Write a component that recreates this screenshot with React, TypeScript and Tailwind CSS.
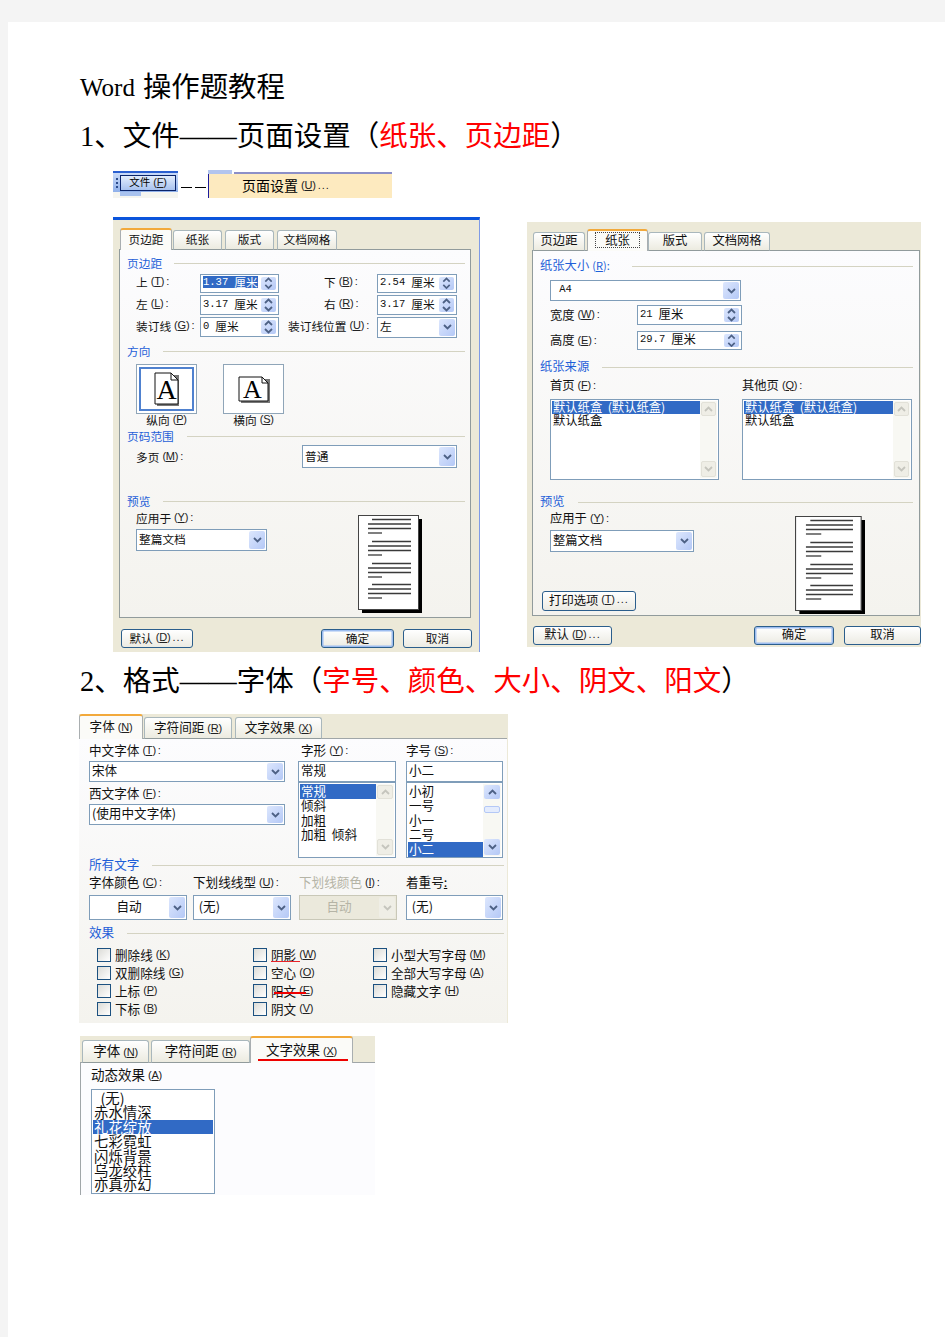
// App.tsx — scanned Word tutorial page: headings plus XP-style dialog screenshots.
import type { ReactNode } from "react";

const CJK = "font-['Liberation_Serif','Noto_Sans_CJK_SC',serif]";
const UI = "font-['Noto_Sans_CJK_SC',sans-serif]";

function M({ k, after = "" }: { k: string; after?: string }) {
    return (
        <span className="ml-[3px] text-[11px] tracking-[-0.2px] font-['Liberation_Sans',sans-serif] text-[#222]">
            (<span className="underline">{k}</span>){after && <span className="ml-[2px] tracking-[1px]">{after}</span>}
        </span>
    );
}

function Lbl({ t, k, after = ":", className = "" }: { t: string; k?: string; after?: string; className?: string }) {
    return (
        <span className={`inline-flex items-center whitespace-nowrap leading-none pb-[2px] ${className}`}>
            {t}
            {k && <M k={k} after={after} />}
        </span>
    );
}

function Chevron({ up = false, color = "#4d6185" }: { up?: boolean; color?: string }) {
    return (
        <svg width="9" height="6" viewBox="0 0 9 6" className={up ? "rotate-180" : ""}>
            <path d="M1 1 L4.5 4.5 L8 1" fill="none" stroke={color} strokeWidth="1.8" />
        </svg>
    );
}

function ComboBtn({ disabled = false }: { disabled?: boolean }) {
    return (
        <div className={`w-[16px] self-stretch m-[1px] rounded-[2px] flex items-center justify-center ${disabled ? "bg-[#efeee6]" : "bg-linear-to-br from-[#dde7fd] to-[#b4c8f6]"}`}>
            <Chevron color={disabled ? "#c5c5bd" : "#4d6185"} />
        </div>
    );
}

function SpinBtn() {
    return (
        <div className="w-[15px] self-stretch m-[2px] rounded-[2px] bg-linear-to-br from-[#dde7fd] to-[#b4c8f6] flex flex-col items-center justify-center gap-[2px]">
            <Chevron up />
            <Chevron />
        </div>
    );
}

function Field({ w, h, value, unit, kind, selected = false, center = false, disabled = false, mono = false }: {
    w: number; h: number; value: string; unit?: string; kind?: "spin" | "combo"; selected?: boolean; center?: boolean; disabled?: boolean; mono?: boolean;
}) {
    const numeric = mono || unit !== undefined;
    return (
        <div
            className={`flex items-stretch border ${disabled ? "border-[#c9c8b8] bg-[#ebe9dc] text-[#b5b4a6]" : "border-[#7f9db9] bg-white"}`}
            style={{ width: w, height: h }}
        >
            <div className={`flex-1 min-w-0 flex items-center px-[2px] pb-[2px] whitespace-pre leading-none ${center ? "justify-center" : ""}`}>
                <span className={`flex items-center ${selected ? "bg-[#316ac5] text-white" : ""}`}>
                    <span className={numeric ? "font-['Liberation_Mono',monospace] text-[10.5px]" : ""}>{value}</span>
                    {unit && <span className="ml-[6px]">{unit}</span>}
                </span>
            </div>
            {kind === "spin" && <SpinBtn />}
            {kind === "combo" && <ComboBtn disabled={disabled} />}
        </div>
    );
}

function Section({ title, k, gap, className = "", h = 14 }: { title: string; k?: string; gap: number; className?: string; h?: number }) {
    return (
        <div className={`flex items-center text-[#1f5fd8] ${className}`} style={{ height: h }}>
            <span className="whitespace-nowrap leading-none pb-[2px]">{title}{k && <span className="ml-[3px] text-[11px]">(<span className="underline">{k}</span>):</span>}</span>
            <div className="flex-1 h-px bg-[#d4d3c2]" style={{ marginLeft: gap }} />
        </div>
    );
}

function Btn({ w, h = 19, children, primary = false, className = "" }: { w: number; h?: number; children: ReactNode; primary?: boolean; className?: string }) {
    return (
        <div
            className={`flex items-center justify-center rounded-[3px] border border-[#2b5e8c] bg-linear-to-b from-white to-[#ecebe3] whitespace-nowrap leading-none ${primary ? "shadow-[inset_0_0_0_1.5px_#9dbdf0]" : ""} ${className}`}
            style={{ width: w, height: h }}
        >
            {children}
        </div>
    );
}

function Tab({ w, h, label, k, active = false, focus = false }: { w: number; h: number; label: string; k?: string; active?: boolean; focus?: boolean }) {
    return (
        <div
            className={`shrink-0 flex items-center justify-center rounded-t-[3px] border-x pb-[2px] whitespace-nowrap leading-none ${active
                ? "border-[#a9aeb0] border-t-2 border-t-[#f2a93b] bg-[#fbfbf8]"
                : "border-[#a9b7bc] border-t border-t-[#a9b7bc] border-b border-b-[#919b9c] bg-linear-to-b from-white to-[#ecebe0]"}`}
            style={{ width: w, height: h }}
        >
            <span className={focus ? "px-[9px] py-[1px] outline-1 outline-dotted outline-[#444]" : ""}>
                {label}{k && <M k={k} />}
            </span>
        </div>
    );
}

// the little document drawing in the preview box
function PreviewPage({ w, h }: { w: number; h: number }) {
    const blocks = [0, 22, 44, 65];
    return (
        <svg width={w} height={h} viewBox="0 0 64 98" preserveAspectRatio="none" className="shrink-0">
            <rect x="4" y="4" width="60" height="94" fill="#000" />
            <rect x="0.5" y="0.5" width="60" height="94" fill="#fff" stroke="#444" />
            {blocks.map(y => (
                <g key={y} stroke="#3a3a3a" strokeWidth="1.3">
                    <line x1="14" x2="53" y1={4.5 + y} y2={4.5 + y} />
                    <line x1="10" x2="53" y1={9 + y} y2={9 + y} />
                    <line x1="10" x2="53" y1={13.5 + y} y2={13.5 + y} />
                    <line x1="10" x2="24" y1={18 + y} y2={18 + y} />
                </g>
            ))}
        </svg>
    );
}

function OrientBtn({ label, k, portrait = false }: { label: string; k: string; portrait?: boolean }) {
    return (
        <div className="w-[61px] flex flex-col items-center">
            <div className={`w-[61px] h-[50px] flex items-center justify-center bg-white border border-[#8fa5b8] ${portrait ? "shadow-[inset_0_0_0_2px_#fff,inset_0_0_0_4px_#4f81cf]" : ""}`}>
                <svg width={portrait ? 26 : 32} height={portrait ? 34 : 27} viewBox={portrait ? "0 0 26 34" : "0 0 32 27"}>
                    {portrait ? (
                        <>
                            <path d="M3 3 H25 V34 H3 Z" fill="#777" />
                            <path d="M1 1 H17 L24 8 V32 H1 Z" fill="#fff" stroke="#111" strokeWidth="1" />
                            <path d="M17 1 V8 H24" fill="none" stroke="#111" />
                            <text x="12.5" y="27" textAnchor="middle" fontSize="28" fontFamily="Liberation Serif" fill="#000">A</text>
                        </>
                    ) : (
                        <>
                            <path d="M3 3 H32 V27 H3 Z" fill="#777" />
                            <path d="M1 1 H24 L30 7 V25 H1 Z" fill="#fff" stroke="#111" strokeWidth="1" />
                            <path d="M24 1 V7 H30" fill="none" stroke="#111" />
                            <text x="14.5" y="22" textAnchor="middle" fontSize="26" fontFamily="Liberation Serif" fill="#000">A</text>
                        </>
                    )}
                </svg>
            </div>
            <div className="h-[14px] flex items-center"><Lbl t={label} k={k} after="" /></div>
        </div>
    );
}

function ScrollCol({ w, blue = false, thumb = false }: { w: number; blue?: boolean; thumb?: boolean }) {
    const btn = blue ? "bg-linear-to-br from-[#dde7fd] to-[#b4c8f6]" : "bg-[#efeee6] border border-[#e2e1d8]";
    const col = blue ? "#4d6185" : "#c5c5bd";
    return (
        <div className="shrink-0 flex flex-col justify-between bg-[#f8f8f3] p-px" style={{ width: w }}>
            <div className={`h-[14px] rounded-[2px] flex items-center justify-center ${btn}`}><Chevron up color={col} /></div>
            {thumb && <div className="h-[7px] -mt-[20px] rounded-[2px] border border-[#b4c8f6] bg-[#e4ecfd]" />}
            <div className={`h-[16px] rounded-[2px] flex items-center justify-center ${btn}`}><Chevron color={col} /></div>
        </div>
    );
}

function ListBox({ w, h, items, sel, scroll, lh = 14, blue, thumb }: {
    w: number; h: number; items: string[]; sel: number; scroll: number; lh?: number; blue?: boolean; thumb?: boolean;
}) {
    return (
        <div className="flex border border-[#7f9db9] bg-white p-px" style={{ width: w, height: h }}>
            <div className="flex-1 min-w-0 leading-none">
                {items.map((it, i) => (
                    <div
                        key={it}
                        className={`whitespace-pre px-[1px] flex items-center ${i === sel ? "bg-[#316ac5] text-white" : ""}`}
                        style={{ height: lh }}
                    >
                        {it}
                    </div>
                ))}
            </div>
            {scroll > 0 && <ScrollCol w={scroll} blue={blue} thumb={thumb} />}
        </div>
    );
}

function MarginsDialog() {
    return (
        <div className={`${UI} w-[367px] shrink-0 border-t-[3px] border-t-[#0a54dc] border-r border-r-[#7f9be6] bg-[#ece9d8] pt-[8px] pb-[4px] text-[11.7px] text-[#111]`}>
            <div className="relative z-10 -mb-px flex items-end pl-[7px] h-[22px]">
                <Tab w={52} h={22} label="页边距" active />
                <div className="ml-px"><Tab w={49} h={20} label="纸张" /></div>
                <div className="ml-[3px]"><Tab w={49} h={20} label="版式" /></div>
                <div className="ml-[3px]"><Tab w={60} h={20} label="文档网格" /></div>
            </div>
            <div className="mx-[6px] w-[352px] h-[369px] border border-[#919b9c] bg-linear-to-b from-[#fcfcfe] to-[#f4f3ee] pt-[6px] pl-[7px] pr-[5px]">
                <Section title="页边距" gap={12} h={15} />
                <div className="pl-[9px] mt-[2px] grid grid-cols-[64px_79px_98px_80px] grid-rows-[20px_20px_20px] gap-y-[2px] items-center">
                    <Lbl t="上" k="T" /><Field w={79} h={19} value="1.37" unit="厘米" kind="spin" selected />
                    <Lbl t="下" k="B" className="pl-[45px]" /><Field w={80} h={19} value="2.54" unit="厘米" kind="spin" />
                    <Lbl t="左" k="L" /><Field w={79} h={20} value="3.17" unit="厘米" kind="spin" />
                    <Lbl t="右" k="R" className="pl-[45px]" /><Field w={80} h={20} value="3.17" unit="厘米" kind="spin" />
                    <Lbl t="装订线" k="G" /><Field w={79} h={20} value="0" unit="厘米" kind="spin" />
                    <Lbl t="装订线位置" k="U" className="pl-[9px]" /><Field w={80} h={21} value="左" kind="combo" />
                </div>
                <Section title="方向" gap={13} h={13} className="mt-[8px]" />
                <div className="flex gap-[26px] pl-[9px] mt-[6px]">
                    <OrientBtn label="纵向" k="P" portrait />
                    <OrientBtn label="横向" k="S" />
                </div>
                <Section title="页码范围" gap={13} h={13} className="mt-[2px]" />
                <div className="flex items-center pl-[9px] mt-[2px] h-[23px]">
                    <div className="w-[166px]"><Lbl t="多页" k="M" /></div>
                    <Field w={155} h={23} value="普通" kind="combo" />
                </div>
                <Section title="预览" gap={13} h={13} className="mt-[27px]" />
                <div className="flex pl-[9px]">
                    <div className="w-[222px] pt-[4px]">
                        <div className="h-[14px] flex items-center"><Lbl t="应用于" k="Y" /></div>
                        <div className="mt-[3px]"><Field w={131} h={22} value="整篇文档" kind="combo" /></div>
                    </div>
                    <div className="mt-[7px]"><PreviewPage w={64} h={98} /></div>
                </div>
            </div>
            <div className="mt-[11px] pl-[8px] pr-[7px] flex">
                <Btn w={72}><Lbl t="默认" k="D" after="..." /></Btn>
                <Btn w={73} primary className="ml-auto pb-[2px]">确定</Btn>
                <Btn w={69} className="ml-[9px] pb-[2px]">取消</Btn>
            </div>
        </div>
    );
}

function PaperDialog() {
    const trays = ["默认纸盒  (默认纸盒)", "默认纸盒"];
    return (
        <div className={`${UI} w-[394px] h-[425px] shrink-0 mt-[5px] bg-[#ece9d8] pt-[7px] text-[12.3px] text-[#111]`}>
            <div className="relative z-10 -mb-px flex items-end pl-[6px] h-[22px]">
                <Tab w={52} h={19} label="页边距" />
                <div className="ml-[2px]"><Tab w={61} h={22} label="纸张" active focus /></div>
                <Tab w={54} h={19} label="版式" />
                <div className="ml-[2px]"><Tab w={66} h={19} label="文档网格" /></div>
            </div>
            <div className="ml-[5px] w-[388px] h-[366px] border border-[#919b9c] bg-linear-to-b from-[#fcfcfe] to-[#f4f3ee] pt-[8px] pl-[7px] pr-[6px]">
                <Section title="纸张大小" k="R" gap={22} />
                <div className="pl-[10px]">
                    <div className="mt-[7px]"><Field w={191} h={21} value=" A4" kind="combo" mono /></div>
                    <div className="mt-[4px] h-[20px] flex items-center">
                        <div className="w-[87px]"><Lbl t="宽度" k="W" /></div>
                        <Field w={105} h={20} value="21" unit="厘米" kind="spin" />
                    </div>
                    <div className="mt-[6px] h-[19px] flex items-center">
                        <div className="w-[87px]"><Lbl t="高度" k="E" /></div>
                        <Field w={105} h={19} value="29.7" unit="厘米" kind="spin" />
                    </div>
                </div>
                <Section title="纸张来源" gap={13} className="mt-[10px]" />
                <div className="pl-[10px] mt-[5px] grid grid-cols-[169px_170px] gap-x-[23px]">
                    <div className="h-[14px] flex items-center"><Lbl t="首页" k="F" /></div>
                    <div className="h-[14px] flex items-center"><Lbl t="其他页" k="Q" /></div>
                    <div className="mt-[6px]"><ListBox w={169} h={81} items={trays} sel={0} scroll={17} lh={13} /></div>
                    <div className="mt-[6px]"><ListBox w={170} h={81} items={trays} sel={0} scroll={17} lh={13} /></div>
                </div>
                <Section title="预览" gap={13} className="mt-[15px]" />
                <div className="flex pl-[10px]">
                    <div className="w-[245px] pt-[3px]">
                        <div className="h-[14px] flex items-center"><Lbl t="应用于" k="Y" /></div>
                        <div className="mt-[4px]"><Field w={144} h={22} value="整篇文档" kind="combo" /></div>
                        <Btn w={94} h={20} className="mt-[39px] -ml-[8px]"><Lbl t="打印选项" k="T" after="..." /></Btn>
                    </div>
                    <div className="mt-[7px]"><PreviewPage w={70} h={98} /></div>
                </div>
            </div>
            <div className="mt-[10px] pl-[6px] flex">
                <Btn w={79}><Lbl t="默认" k="D" after="..." /></Btn>
                <Btn w={80} primary className="ml-auto pb-[2px]">确定</Btn>
                <Btn w={77} className="ml-[10px] pb-[2px]">取消</Btn>
            </div>
        </div>
    );
}

function Check({ t, k, mark }: { t: string; k: string; mark?: "thin" | "thick" }) {
    return (
        <div className="h-[18px] flex items-center gap-[4px]">
            <div className="w-[14px] h-[14px] shrink-0 border border-[#1c5180] bg-linear-to-br from-[#dcdcd7] to-white" />
            <span className="relative">
                <Lbl t={t} k={k} after="" />
                {mark === "thin" && <span className="absolute left-0 top-[15px] w-[29px] h-px bg-[#e8242a]" />}
                {mark === "thick" && <span className="absolute left-[3px] top-[10px] w-[32px] h-[2px] bg-[#ee0000]" />}
            </span>
        </div>
    );
}

function FontDialog() {
    return (
        <div className={`${UI} w-[429px] h-[309px] shrink-0 -ml-px bg-[#ece9d8] text-[12.6px] text-[#111]`}>
            <div className="relative z-10 -mb-px flex items-end h-[25px]">
                <Tab w={64} h={25} label="字体" k="N" active />
                <div className="ml-px"><Tab w={88} h={22} label="字符间距" k="R" /></div>
                <div className="ml-[3px]"><Tab w={87} h={22} label="文字效果" k="X" /></div>
            </div>
            <div className="h-[285px] w-[428px] border-t border-[#a0a6a8] bg-linear-to-b from-[#fcfcfe] to-[#f4f3ee] pl-[10px] pr-[3px]">
                <div className="grid grid-cols-[209px_108px_97px] pt-[5px]">
                    <div>
                        <div className="h-[14px] flex items-center"><Lbl t="中文字体" k="T" /></div>
                        <div className="mt-[3px]"><Field w={196} h={21} value="宋体" kind="combo" /></div>
                        <div className="mt-[5px] h-[14px] flex items-center"><Lbl t="西文字体" k="F" /></div>
                        <div className="mt-[3px]"><Field w={196} h={21} value="(使用中文字体)" kind="combo" /></div>
                    </div>
                    <div>
                        <div className="h-[14px] flex items-center pl-[3px]"><Lbl t="字形" k="Y" /></div>
                        <div className="mt-[3px]"><Field w={98} h={21} value="常规" /></div>
                        <ListBox w={98} h={76} items={["常规", "倾斜", "加粗", "加粗  倾斜"]} sel={0} scroll={18} lh={14.5} />
                    </div>
                    <div>
                        <div className="h-[14px] flex items-center"><Lbl t="字号" k="S" /></div>
                        <div className="mt-[3px]"><Field w={97} h={21} value="小二" /></div>
                        <ListBox w={97} h={76} items={["小初", "一号", "小一", "二号", "小二"]} sel={4} scroll={18} lh={14.5} blue thumb />
                    </div>
                </div>
                <Section title="所有文字" gap={13} />
                <div className="mt-[4px] grid grid-cols-[104px_106px_107px_97px]">
                    <div className="h-[14px] flex items-center"><Lbl t="字体颜色" k="C" /></div>
                    <div className="h-[14px] flex items-center"><Lbl t="下划线线型" k="U" /></div>
                    <div className="h-[14px] flex items-center text-[#b5b4a6]"><Lbl t="下划线颜色" k="I" /></div>
                    <div className="h-[14px] flex items-center"><Lbl t="着重号" /><span className="underline leading-none pb-[2px]">:</span></div>
                    <div className="mt-[5px]"><Field w={98} h={25} value="自动" kind="combo" center /></div>
                    <div className="mt-[5px]"><Field w={98} h={25} value=" (无)" kind="combo" /></div>
                    <div className="mt-[5px]"><Field w={98} h={25} value="自动" kind="combo" center disabled /></div>
                    <div className="mt-[5px]"><Field w={97} h={25} value=" (无)" kind="combo" /></div>
                </div>
                <Section title="效果" gap={13} className="mt-[6px]" />
                <div className="mt-[6px] pl-[8px] grid grid-cols-[156px_120px_1fr]">
                    <div>
                        <Check t="删除线" k="K" />
                        <Check t="双删除线" k="G" />
                        <Check t="上标" k="P" />
                        <Check t="下标" k="B" />
                    </div>
                    <div>
                        <Check t="阴影" k="W" mark="thin" />
                        <Check t="空心" k="O" />
                        <Check t="阳文" k="E" mark="thick" />
                        <Check t="阴文" k="V" />
                    </div>
                    <div>
                        <Check t="小型大写字母" k="M" />
                        <Check t="全部大写字母" k="A" />
                        <Check t="隐藏文字" k="H" />
                    </div>
                </div>
            </div>
        </div>
    );
}

function EffectsDialog() {
    const effects = ["  (无)", "赤水情深", "礼花绽放", "七彩霓虹", "闪烁背景", "乌龙绞柱", "亦真亦幻"];
    return (
        <div className={`${UI} w-[295px] h-[159px] shrink-0 mt-[13px] bg-[#ece9d8] text-[13.5px] text-[#111]`}>
            <div className="relative z-10 -mb-px flex items-end pl-[2px] h-[27px]">
                <Tab w={67} h={23} label="字体" k="N" />
                <div className="ml-[2px]"><Tab w={99} h={23} label="字符间距" k="R" /></div>
                <div className="relative">
                    <Tab w={103} h={27} label="文字效果" k="X" active />
                    <span className="absolute left-[8px] bottom-[2px] w-[90px] h-[2px] bg-[#ee0000]" />
                </div>
            </div>
            <div className="h-[133px] border-t border-l border-[#a0a6a8] bg-[#fcfcfe] pl-[10px] pt-[6px]">
                <div className="h-[14px] flex items-center"><Lbl t="动态效果" k="A" after="" /></div>
                <div className="mt-[6px] text-[14.4px]">
                    <ListBox w={124} h={105} items={effects} sel={2} scroll={0} lh={14.4} />
                </div>
            </div>
        </div>
    );
}

function MenuStrip() {
    return (
        <div className={`${UI} flex items-start h-[28px] ml-[33px]`}>
            {/* toolbar crop */}
            <div className="w-[65px] h-[27px] mt-px border-t-2 border-[#2a5fd0] bg-[#f5f5f0] flex flex-col">
                <div className="h-[19px] bg-linear-to-b from-[#c9daf8] to-[#8fb0ea] flex items-center pl-[3px] gap-[2px]">
                    <div className="w-[2px] h-[10px] border-l-2 border-dotted border-[#2b4c8c]" />
                    <div className="w-[56px] h-[16px] border border-[#0a246a] bg-linear-to-b from-[#e3edfc] to-[#a8c2ef] flex items-center justify-center pb-px text-[10.5px] leading-none whitespace-nowrap">
                        文件<M k="F" />
                    </div>
                </div>
                <div className="h-[4px] w-[21px] ml-[7px] bg-[#a8c2ef]" />
            </div>
            <div className="w-[30px] pl-[3px] mt-[17px] flex gap-[3px]">
                <div className="w-[11px] h-px bg-black" />
                <div className="w-[11px] h-px bg-black" />
            </div>
            {/* menu crop */}
            <div className="w-[184px] h-[28px] flex flex-col">
                <div className="h-[4px] flex items-start">
                    <div className="w-[24px] h-[4px] bg-[#b3c5ee]" />
                    <div className="flex-1 mt-[2px] h-[2px] ml-[2px] bg-[#8c8fc8]" />
                </div>
                <div className="flex-1 border-l border-[#1c1c9c] bg-[#fdeabf] flex items-center pl-[33px] pb-[2px] text-[14px] leading-none whitespace-nowrap">
                    页面设置<M k="U" after="..." />
                </div>
            </div>
        </div>
    );
}

export default function App() {
    return (
        <div className="min-h-[1337px] bg-[#f4f4f4] pt-[22px] pl-[8px]">
            <div className="h-[1315px] bg-white pl-[72px] pt-[46px] text-black">
                <h1 className={`${CJK} h-[40px] flex items-center text-[28.4px] font-normal whitespace-pre`}>
                    <span className="text-[25px] mr-[8px]">Word</span>操作题教程
                </h1>
                <h2 className={`${CJK} mt-[9px] h-[40px] flex items-center text-[28.5px] font-normal whitespace-pre`}>
                    1、文件——页面设置（<span className="text-[#ff0000]">纸张、页边距</span>）
                </h2>
                <div className="mt-[13px]"><MenuStrip /></div>
                <div className="mt-[19px] ml-[33px] flex items-start gap-[47px]">
                    <MarginsDialog />
                    <PaperDialog />
                </div>
                <h2 className={`${CJK} mt-[10px] h-[40px] flex items-center text-[28.5px] font-normal whitespace-pre`}>
                    2、格式——字体（<span className="text-[#ff0000]">字号、颜色、大小、阴文、阳文</span>）
                </h2>
                <div className="mt-[12px] flex flex-col items-start">
                    <FontDialog />
                    <EffectsDialog />
                </div>
            </div>
        </div>
    );
}
